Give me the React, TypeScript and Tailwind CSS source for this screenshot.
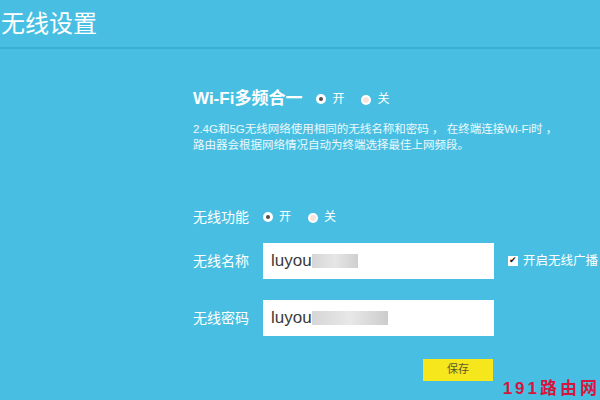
import React from 'react';

function Radio({ checked }: { checked?: boolean }) {
  return (
    <span className="inline-flex size-[10px] items-center justify-center rounded-full bg-white">
      {checked ? <span className="size-[4px] rounded-full bg-[#5a4a4a]" /> : <span className="size-[6px] rounded-full bg-[#fbe3dc]" />}
    </span>
  );
}

function RadioPair() {
  return (
    <div className="flex items-center text-[12px] text-white">
      <Radio checked />
      <span className="ml-[6px]">开</span>
      <span className="ml-[17px]"><Radio /></span>
      <span className="ml-[6px]">关</span>
    </div>
  );
}

export default function App() {
  const font = { fontFamily: '"Liberation Sans", "Noto Sans CJK SC", sans-serif' };
  return (
    <div className="relative h-[400px] w-[600px] overflow-hidden bg-[#48bfe2]" style={font}>
      {/* Header */}
      <header className="flex h-[49px] items-center border-b-2 border-[#3aaed3] pl-[1px]">
        <h1 className="text-[24px] leading-none text-white">无线设置</h1>
      </header>

      <div className="flex flex-col pl-[193px]">
        {/* Wi-Fi 多频合一 */}
        <div className="mt-[37px] flex items-center">
          <span className="text-[17px] font-bold text-white">Wi-Fi多频合一</span>
          <span className="ml-[14px]"><RadioPair /></span>
        </div>
        <p className="mt-[9px] text-[11.5px] leading-[16px] text-white/90">
          2.4G和5G无线网络使用相同的无线名称和密码&nbsp;，&nbsp;在终端连接Wi-Fi时&nbsp;，
          <br />
          路由器会根据网络情况自动为终端选择最佳上网频段。
        </p>

        {/* 无线功能 */}
        <div className="mt-[54px] flex h-[20px] items-center">
          <span className="w-[70px] text-[14px] leading-[20px] text-white">无线功能</span>
          <RadioPair />
        </div>

        {/* 无线名称 */}
        <div className="mt-[16px] flex h-[36px] items-center">
          <span className="w-[70px] text-[14px] leading-[20px] text-white">无线名称</span>
          <div className="flex h-[36px] w-[231px] items-center bg-white pl-[8px]">
            <span className="text-[17px] text-[#3a3a3a]">luyou</span>
            <span className="h-[14px] w-[46px] bg-gradient-to-r from-[#d6d6d6] via-[#e6e6e6] to-[#cfcfcf]" />
          </div>
          <div className="ml-[14px] flex items-center gap-[5px] whitespace-nowrap">
            <span className="flex size-[10px] items-center justify-center bg-white text-[9px] leading-none text-[#222]">✔</span>
            <span className="text-[12.5px] leading-[20px] text-white">开启无线广播</span>
          </div>
        </div>

        {/* 无线密码 */}
        <div className="mt-[21px] flex h-[36px] items-center">
          <span className="w-[70px] text-[14px] leading-[20px] text-white">无线密码</span>
          <div className="flex h-[36px] w-[231px] items-center bg-white pl-[8px]">
            <span className="text-[17px] text-[#3a3a3a]">luyou</span>
            <span className="h-[14px] w-[76px] bg-gradient-to-r from-[#d6d6d6] via-[#e8e8e8] to-[#cccccc]" />
          </div>
        </div>

        {/* Save */}
        <div className="mt-[23px] flex w-[300px] justify-end">
          <button className="flex h-[22px] w-[70px] items-center justify-center bg-[#f6e61c] text-[11px] text-[#5b5a2a]">
            保存
          </button>
        </div>
      </div>

      {/* Watermark */}
      <div className="absolute bottom-[3px] right-[0px] text-[17px] font-bold leading-none tracking-[3px] text-[#d4163f]">
        191路由网
      </div>
    </div>
  );
}
